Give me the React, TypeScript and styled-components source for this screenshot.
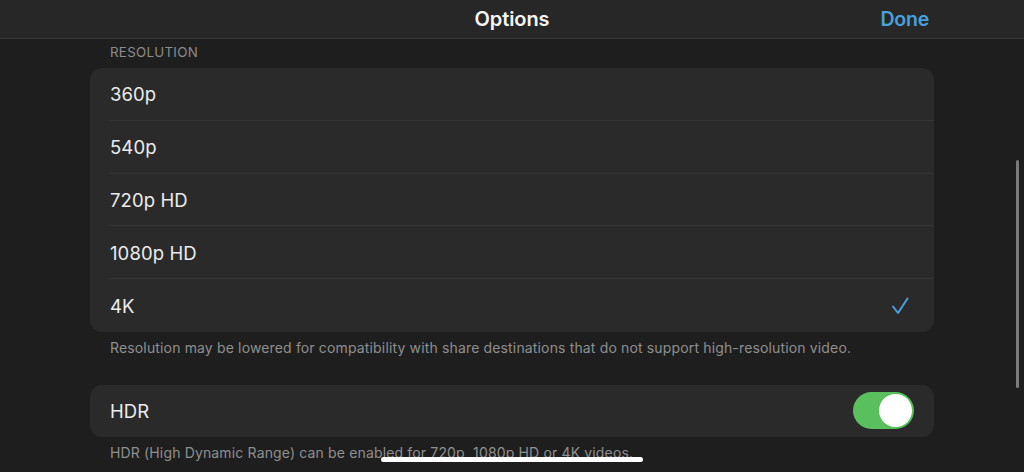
import React from "react";
import styled, { createGlobalStyle } from "styled-components";

const Global = createGlobalStyle`
  html, body { margin: 0; padding: 0; background: #1e1e1e; }
  body { width: 1024px; height: 472px; overflow: hidden; font-family: Inter, "Noto Sans", "Liberation Sans", sans-serif; -webkit-font-smoothing: antialiased; }
`;

const Screen = styled.div`
  position: relative;
  width: 1024px;
  height: 472px;
  overflow: hidden;
  background: #1e1e1e;
`;

const Header = styled.header`
  height: 38px;
  border-bottom: 1px solid #363636;
  background: #272727;
  display: grid;
  grid-template-columns: 1fr auto 1fr;
  align-items: center;
  padding: 0 95px 0 95px;
`;

const Title = styled.div`
  grid-column: 2;
  color: #f5f5f5;
  font-size: 20px;
  font-weight: 600;
  letter-spacing: -0.1px;
`;

const DoneButton = styled.button`
  grid-column: 3;
  justify-self: end;
  background: none;
  border: none;
  padding: 0;
  font-family: inherit;
  color: #48a0dc;
  font-size: 19.5px;
  font-weight: 600;
  letter-spacing: -0.2px;
`;

const Content = styled.main`
  padding: 0 90px;
  display: flex;
  flex-direction: column;
`;

const SectionLabel = styled.div`
  color: #8c8c8c;
  font-size: 13.3px;
  letter-spacing: 0.3px;
  padding: 5px 20px 0;
  height: 24px;
  line-height: 16px;
`;

const Group = styled.div`
  background: #2a2a2a;
  border-radius: 12px;
  overflow: hidden;
`;

const Row = styled.div<{ $h?: number; $last?: boolean }>`
  position: relative;
  height: ${(p) => p.$h ?? 52.8}px;
  display: flex;
  align-items: center;
  justify-content: space-between;
  padding: 0 20px;
  color: #ececec;
  font-size: 18.5px;
  letter-spacing: 0.1px;
  &::after {
    content: "";
    display: ${(p) => (p.$last ? "none" : "block")};
    position: absolute;
    left: 20px;
    right: 0;
    bottom: 0;
    height: 1px;
    background: #353535;
  }
`;

const Footnote = styled.div<{ $mb?: number }>`
  color: #8f8f8f;
  font-size: 14px;
  letter-spacing: 0.15px;
  padding: 7px 20px 0;
  height: ${(p) => p.$mb ?? 46}px;
  line-height: 17px;
  box-sizing: border-box;
`;

const Toggle = styled.div<{ $on: boolean }>`
  width: 61px;
  height: 37px;
  border-radius: 19px;
  background: ${(p) => (p.$on ? "#5ac05e" : "#555")};
  display: flex;
  align-items: center;
  justify-content: ${(p) => (p.$on ? "flex-end" : "flex-start")};
  padding: 0 2px;
  box-sizing: border-box;
`;

const Knob = styled.div`
  width: 33px;
  height: 33px;
  border-radius: 50%;
  background: #ffffff;
`;

const ScrollIndicator = styled.div`
  position: absolute;
  right: 5px;
  top: 160px;
  width: 3px;
  height: 228px;
  border-radius: 2px;
  background: #7b7b7b;
`;

const HomeIndicator = styled.div`
  position: absolute;
  left: 381px;
  bottom: 10px;
  width: 262px;
  height: 5px;
  border-radius: 3px;
  background: #ffffff;
`;

const Check = () => (
  <svg width="18" height="18" viewBox="0 0 18 18" style={{ marginRight: 5 }}>
    <path d="M2 9.5 L7 16 L16.5 1.5" fill="none" stroke="#48a0dc" strokeWidth="2" strokeLinecap="round" strokeLinejoin="round" />
  </svg>
);

const resolutions = ["360p", "540p", "720p HD", "1080p HD", "4K"];

export default function App() {
  return (
    <Screen>
      <Global />
      <Header>
        <Title>Options</Title>
        <DoneButton>Done</DoneButton>
      </Header>
      <Content>
        <SectionLabel>RESOLUTION</SectionLabel>
        <Group>
          {resolutions.map((r, i) => (
            <Row key={r} $last={i === resolutions.length - 1}>
              <span>{r}</span>
              {r === "4K" && <Check />}
            </Row>
          ))}
        </Group>
        <Footnote $mb={53}>
          Resolution may be lowered for compatibility with share destinations that do not support high-resolution video.
        </Footnote>
        <Group>
          <Row $h={52} $last>
            <span>HDR</span>
            <Toggle $on>
              <Knob />
            </Toggle>
          </Row>
        </Group>
        <Footnote>HDR (High Dynamic Range) can be enabled for 720p, 1080p HD or 4K videos.</Footnote>
      </Content>
      <ScrollIndicator />
      <HomeIndicator />
    </Screen>
  );
}
